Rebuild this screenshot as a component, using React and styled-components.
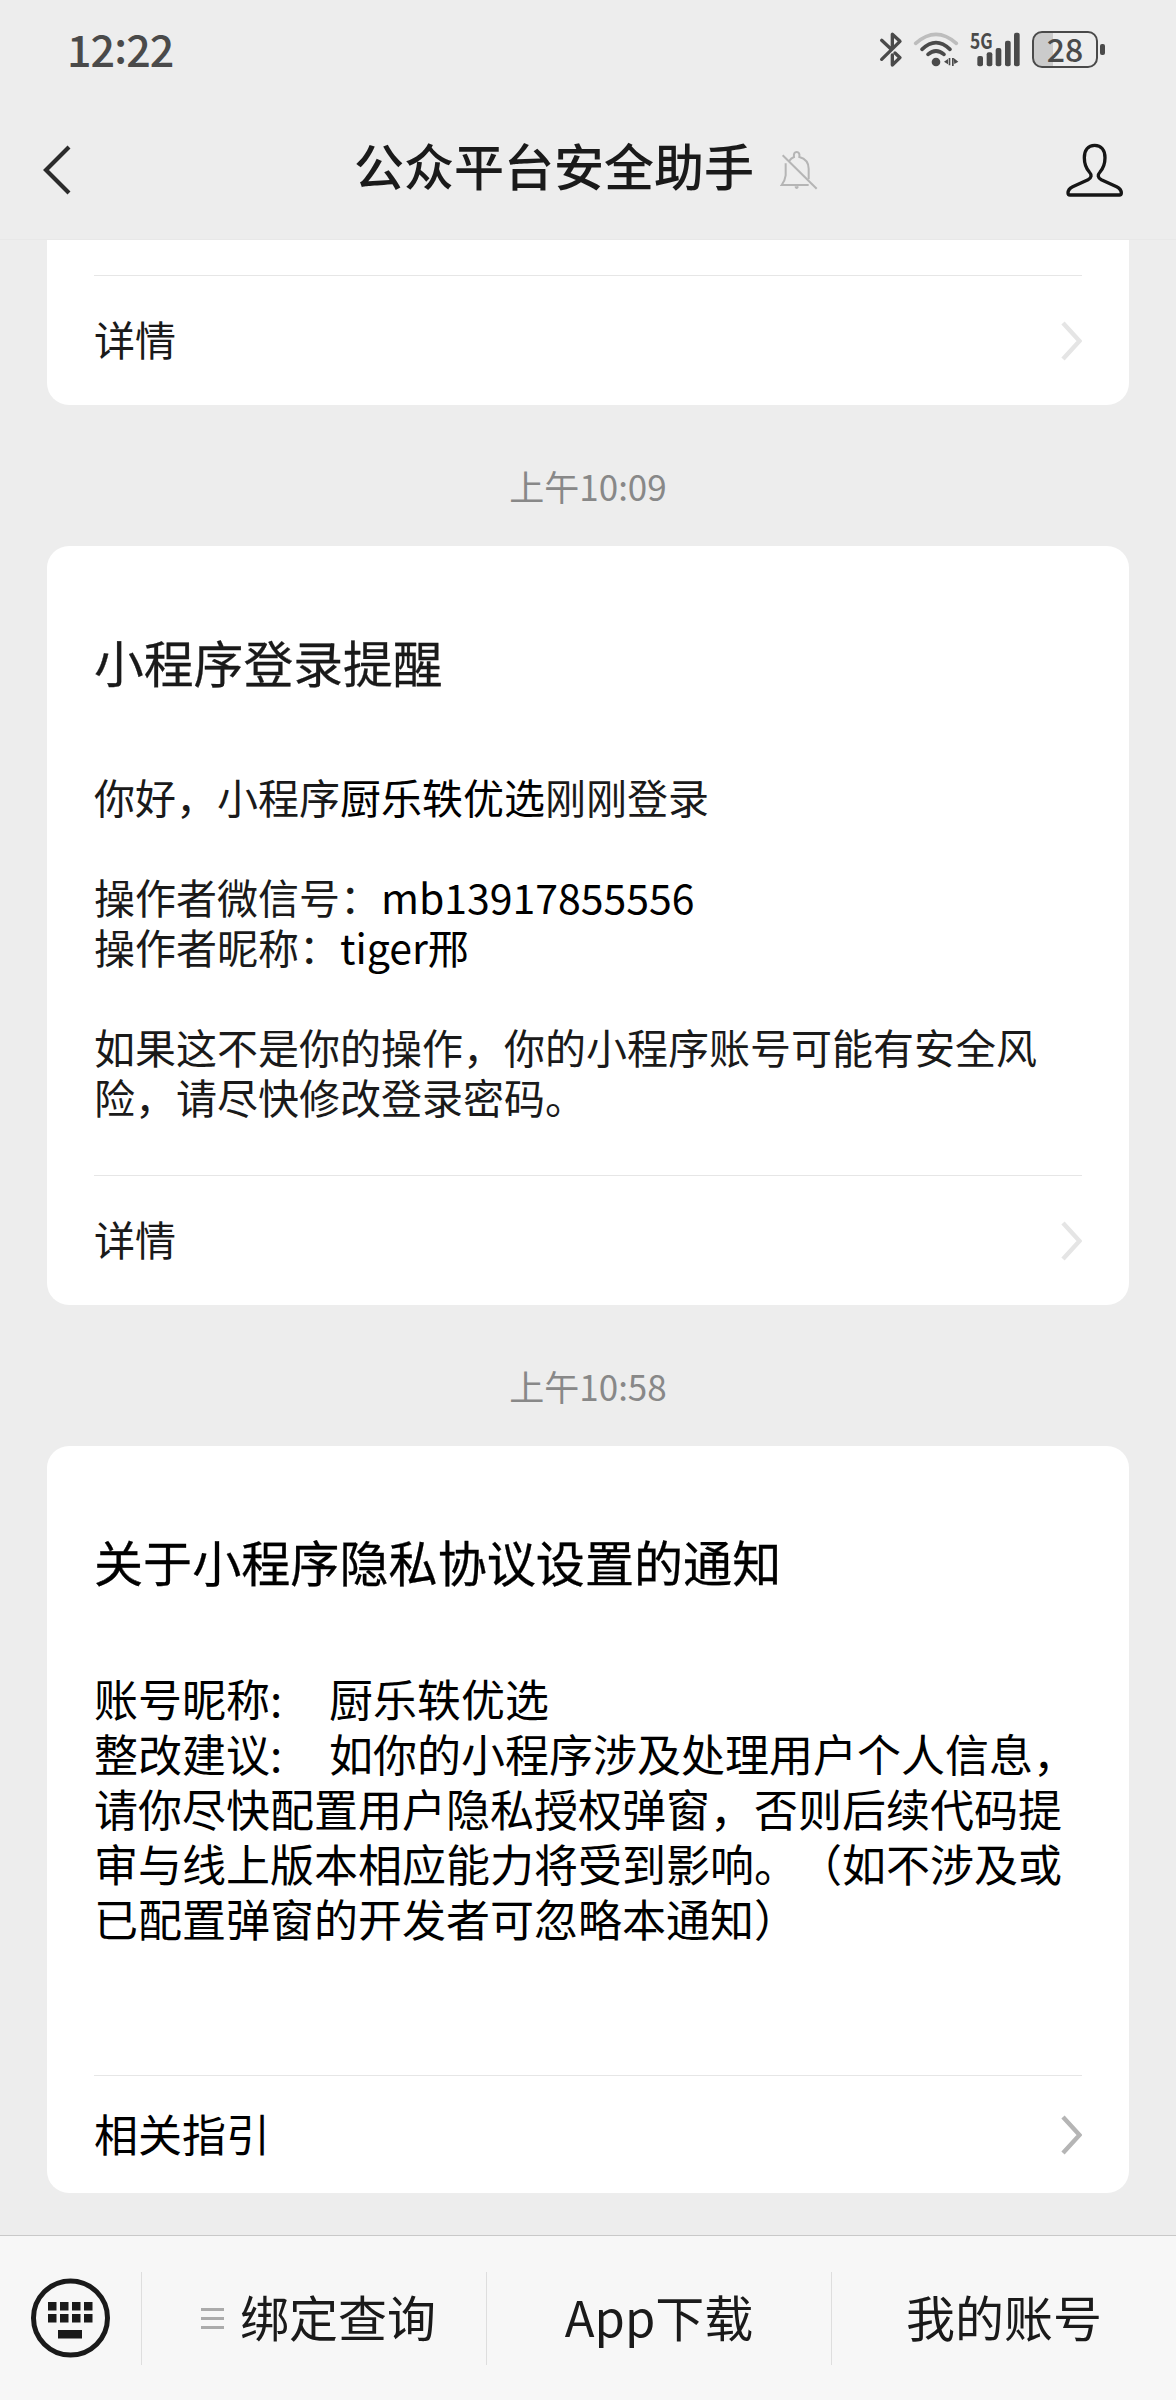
import styled, { createGlobalStyle } from "styled-components";

const notices = [
  {
    id: 1,
    time: "上午10:09",
    title: "小程序登录提醒",
    action: "详情",
  },
];

function BluetoothIcon() {
  return (
    <svg width="24" height="37" viewBox="0 0 72 111" fill="none">
      <path
        d="M8 28L36 54M8 85L63 31L40 10V50M40 72V102L63 80L48 66"
        stroke="#4a4a4a"
        strokeWidth="10"
        strokeLinecap="round"
        strokeLinejoin="round"
      />
    </svg>
  );
}

function WifiIcon() {
  return (
    <svg width="46" height="37" viewBox="0 0 138 111" fill="none">
      <g strokeWidth="11" strokeLinecap="round">
        <path d="M8 37Q69 -17 130 37" stroke="#bdbdbd" />
        <path d="M27 55Q69 15 111 55" stroke="#4a4a4a" />
        <path d="M45 70Q69 50 93 70" stroke="#4a4a4a" />
      </g>
      <circle cx="69" cy="93" r="13" fill="#4a4a4a" />
      <path
        d="M93 92L105 84V100ZM107 81H112V103H107ZM117 81H122V105H117ZM122 81L136 92L124 99Z"
        fill="#4a4a4a"
      />
    </svg>
  );
}

function SignalIcon() {
  return (
    <svg width="52" height="37" viewBox="0 0 156 111" fill="#4a4a4a" overflow="visible">
      <NetworkText x="3" y="54" textLength="68" lengthAdjust="spacingAndGlyphs">
        5G
      </NetworkText>
      <rect x="25" y="75" width="17" height="31" rx="6" />
      <rect x="53" y="64" width="17" height="42" rx="6" />
      <rect x="80" y="51" width="17" height="55" rx="6" />
      <rect x="108" y="29" width="17" height="77" rx="6" />
      <rect x="135" y="5" width="17" height="101" rx="6" />
    </svg>
  );
}

function BackIcon() {
  return (
    <svg width="28" height="50" viewBox="0 0 28 50" fill="none">
      <path d="M26 2L3 25L26 48" stroke="#2b2b2b" strokeWidth="4.2" />
    </svg>
  );
}

function MutedIcon() {
  return (
    <svg width="38" height="40" viewBox="0 0 114 120" fill="none">
      <g stroke="#b5b5b5" strokeWidth="6">
        <path d="M8 16L110 116" />
        <path d="M27 34Q33 24 42 21Q40 6 50 6Q60 6 58 21Q86 29 86 56V88" />
        <path d="M17 40V76Q15 92 5 105H86" />
        <path d="M46 109Q50 119 54 109" />
      </g>
    </svg>
  );
}

function PersonIcon() {
  return (
    <svg width="57" height="54" viewBox="0 0 171 162" fill="none">
      <path
        d="M86 7C66 7 55 22 55 44C55 60 59 74 70 87C78 96 77 104 66 110L20 131C10 136 6 141 6 150C6 154 8 156 12 156H160C164 156 166 154 166 150C166 141 162 136 152 131L106 110C95 104 94 96 102 87C113 74 117 60 117 44C117 22 106 7 86 7Z"
        stroke="#161616"
        strokeWidth="10"
      />
    </svg>
  );
}

function ArrowIcon({ color }) {
  return (
    <svg width="22" height="40" viewBox="0 0 22 40" fill="none">
      <path d="M3 2L19.5 20L3 38" stroke={color} strokeWidth="4.4" />
    </svg>
  );
}

function KeyboardIcon() {
  return (
    <svg width="80" height="80" viewBox="0 0 80 80" fill="#1a1a1a">
      <circle cx="40.5" cy="40" r="37" fill="none" stroke="#1a1a1a" strokeWidth="5" />
      {[18, 30, 42, 54].map((x) => (
        <g key={x}>
          <rect x={x} y="24" width="8.5" height="8.5" />
          <rect x={x} y="36" width="8.5" height="8.5" />
        </g>
      ))}
      <rect x="28" y="52" width="24" height="8.5" />
    </svg>
  );
}

function App() {
  return (
    <>
      <GlobalStyle />
      <Screen>
        <StatusBar>
          <Clock>
            12<span>:</span>22
          </Clock>
          <StatusIcons>
            <BluetoothIcon />
            <WifiIcon />
            <SignalIcon />
            <Battery>
              <BatteryBody>28</BatteryBody>
              <BatteryCap />
            </Battery>
          </StatusIcons>
        </StatusBar>

        <NavBar>
          <BackIcon />
          <NavTitle>
            <h1>公众平台安全助手</h1>
            <MutedIcon />
          </NavTitle>
          <PersonIcon />
        </NavBar>

        <Messages>
          <Card $cut>
            <CardFooter>
              <span>详情</span>
              <ArrowIcon color="#e5e5e5" />
            </CardFooter>
          </Card>

          {notices.map((notice) => {
            return (
              <div key={notice.id}>
                <Time>{notice.time}</Time>
                <Card>
                  <CardTitle>{notice.title}</CardTitle>
                  <CardBody>
                    <p>
                      你好，小程序<b>厨乐轶优选</b>刚刚登录
                    </p>
                    <p>
                      操作者微信号：<b>mb13917855556</b>
                      <br />
                      操作者昵称：<b>tiger邢</b>
                    </p>
                    <p>
                      如果这不是你的操作，你的小程序账号可能有安全风
                      <br />
                      险，请尽快修改登录密码。
                    </p>
                  </CardBody>
                  <CardFooter>
                    <span>{notice.action}</span>
                    <ArrowIcon color="#e5e5e5" />
                  </CardFooter>
                </Card>
              </div>
            );
          })}

          <Time>上午10:58</Time>
          <Card $strong>
            <CardTitle $large>关于小程序隐私协议设置的通知</CardTitle>
            <CardBody $large>
              <p>
                <Label>账号昵称:</Label>厨乐轶优选
                <br />
                <Label>整改建议:</Label>如你的小程序涉及处理用户个人信息，
                <br />
                请你尽快配置用户隐私授权弹窗，否则后续代码提
                <br />
                审与线上版本相应能力将受到影响。（如不涉及或
                <br />
                已配置弹窗的开发者可忽略本通知）
              </p>
            </CardBody>
            <CardFooter $large>
              <span>相关指引</span>
              <ArrowIcon color="#b5b5b5" />
            </CardFooter>
          </Card>
        </Messages>

        <BottomBar>
          <KeyboardButton>
            <KeyboardIcon />
          </KeyboardButton>
          <MenuItem>
            <MenuLines>
              <i />
              <i />
              <i />
            </MenuLines>
            绑定查询
          </MenuItem>
          <MenuItem>App下载</MenuItem>
          <MenuItem>我的账号</MenuItem>
        </BottomBar>
      </Screen>
    </>
  );
}

const GlobalStyle = createGlobalStyle`
  * {
    box-sizing: border-box;
    margin: 0;
    padding: 0;
  }

  body {
    background: #ededed;
    font-family: "Noto Sans CJK SC", sans-serif;
    text-spacing-trim: space-all;
  }

  svg {
    display: block;
    flex-shrink: 0;
  }
`;

const Screen = styled.div`
  width: 1176px;
  height: 2400px;
  display: flex;
  flex-direction: column;
  overflow: hidden;
  background: #ededed;
  color: #1a1a1a;
`;

const StatusBar = styled.div`
  height: 100px;
  padding: 0 71px 0 67px;
  display: flex;
  justify-content: space-between;
`;

const Clock = styled.div`
  padding-top: 16px;
  font-size: 43px;
  font-weight: 500;
  line-height: 64px;
  letter-spacing: -0.9px;
  color: #4a4a4a;

  span {
    position: relative;
    top: -4px;
  }
`;

const StatusIcons = styled.div`
  padding-top: 31px;
  display: flex;
  align-items: flex-start;

  svg:nth-child(2) {
    margin-left: 10px;
  }

  svg:nth-child(3) {
    margin-left: 10px;
  }
`;

const NetworkText = styled.text`
  font-size: 64px;
  font-weight: 700;
`;

const Battery = styled.div`
  margin-left: 11px;
  display: flex;
  align-items: center;
  gap: 2px;
`;

const BatteryBody = styled.div`
  width: 66px;
  height: 37px;
  border: 2px solid #4a4a4a;
  border-radius: 10px;
  background: linear-gradient(to right, #cbcbcb 19px, transparent 19px);
  font-size: 32px;
  font-weight: 500;
  line-height: 30px;
  text-align: center;
  color: #4a4a4a;
`;

const BatteryCap = styled.div`
  width: 5px;
  height: 11px;
  border-radius: 2px;
  background: #4a4a4a;
`;

const NavBar = styled.div`
  height: 140px;
  padding: 0 53px 0 43px;
  display: flex;
  align-items: center;
  justify-content: space-between;
  border-bottom: 1px solid #e8e8e8;
`;

const NavTitle = styled.div`
  margin-left: 35px;
  display: flex;
  align-items: center;
  gap: 26px;

  h1 {
    padding-bottom: 11px;
    font-size: 50px;
    font-weight: 500;
    line-height: 60px;
  }
`;

const Messages = styled.div`
  flex: 1;
  padding: 0 47px;
`;

const Card = styled.div`
  padding: ${({ $cut }) => ($cut ? "35px" : "85px")} 47px 0;
  border-radius: ${({ $cut }) => ($cut ? "0 0 22px 22px" : "22px")};
  background: #fff;
  color: ${({ $strong }) => ($strong ? "#000" : "#1a1a1a")};
`;

const Time = styled.div`
  height: 141px;
  padding-top: 56px;
  font-size: 35px;
  line-height: 50px;
  text-align: center;
  color: #888;
`;

const CardTitle = styled.h2`
  font-size: ${({ $large }) => ($large ? "49.1px" : "49.8px")};
  font-weight: 400;
  line-height: 60px;
  -webkit-text-stroke: 0.3px currentColor;
`;

const CardBody = styled.div`
  margin: ${({ $large }) => ($large ? "80px 0 129px" : "80px 0 54px")};
  font-size: ${({ $large }) => ($large ? "44px" : "41px")};
  line-height: ${({ $large }) => ($large ? "55px" : "50px")};
  white-space: nowrap;

  p + p {
    margin-top: 50px;
  }

  b {
    font-weight: 400;
    color: #000;
  }
`;

const Label = styled.span`
  display: inline-block;
  width: 235px;
`;

const CardFooter = styled.div`
  height: ${({ $large }) => ($large ? "118px" : "130px")};
  display: flex;
  align-items: center;
  justify-content: space-between;
  border-top: 1px solid #e6e6e6;
  font-size: ${({ $large }) => ($large ? "44px" : "41px")};
  line-height: 60px;

  span {
    padding-bottom: ${({ $large }) => ($large ? "3px" : "6px")};
  }
`;

const BottomBar = styled.div`
  height: 165px;
  display: grid;
  grid-template-columns: 141px repeat(3, 345px);
  align-items: center;
  border-top: 1px solid #c9c9c9;
  background: #f7f7f7;
`;

const KeyboardButton = styled.div`
  padding-left: 30px;
`;

const MenuItem = styled.div`
  height: 93px;
  padding-bottom: 5px;
  display: flex;
  align-items: center;
  justify-content: center;
  border-left: 1px solid #dedede;
  font-size: 49px;
  line-height: 60px;
`;

const MenuLines = styled.div`
  margin: 5px 16px 0 9px;
  display: flex;
  flex-direction: column;
  gap: 6px;

  i {
    width: 23px;
    height: 3px;
    background: #ababab;
  }
`;

export default App;
